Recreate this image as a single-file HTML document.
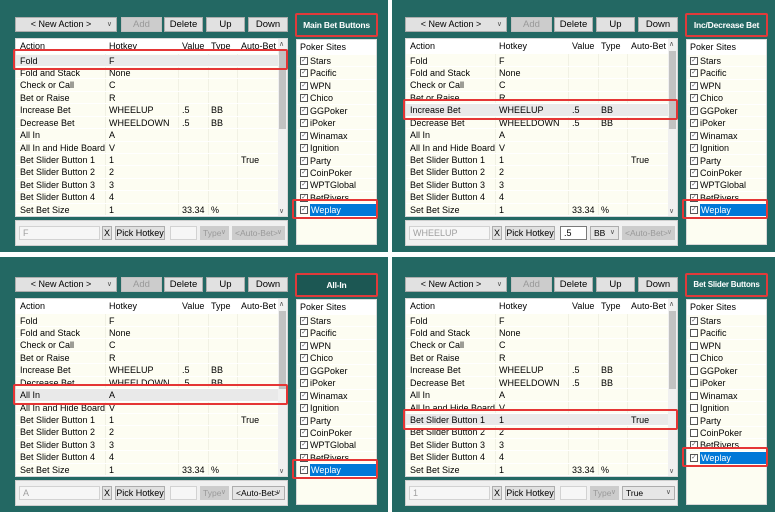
<!DOCTYPE html>
<html><head><meta charset="utf-8">
<style>
*{margin:0;padding:0;box-sizing:border-box}
body{width:775px;height:512px;background:#fff;position:relative;overflow:hidden;font-family:"Liberation Sans",Arial,sans-serif;font-size:9px;color:#000}
.bg{position:absolute;background:#236863}
.p{position:absolute;width:388px;height:252px}
.p>div{position:absolute}
.dd{left:15px;top:17px;width:102px;height:15px;background:#e1e1e1;border:1px solid #adadad;line-height:13px;text-align:center;padding-right:10px}
.chev{position:absolute;right:4px;top:0;font-size:7px;color:#555}
.btn{top:17px;height:15px;background:#e1e1e1;border:1px solid #adadad;line-height:13px;text-align:center;font-size:9.5px}
.dis{background:#cccccc;border-color:#bfbfbf;color:#9a9a9a}
.ttl{left:295px;top:13px;width:83px;height:24px;border:2px solid #e03a3a;color:#fff;font-weight:bold;font-size:8.5px;line-height:20px;text-align:center;border-radius:2px;white-space:nowrap;overflow:hidden;letter-spacing:-0.2px}
.tbl{left:15px;top:38px;width:273px;height:179px;background:#fdfdf2;border:1px solid #d8d8d8;overflow:hidden}
.hd{position:absolute;left:0;top:0;width:264px;height:15px;background:#fff}
.r{position:relative;height:12.45px;border-bottom:1px solid #fff;width:264px}
.r span,.hd span{position:absolute;top:0;line-height:12px;white-space:nowrap}
.hd span{line-height:15px}
.c1{left:4px}.c2{left:93px}.c3{left:166px}.c4{left:195px}.c5{left:225px}
.rows{position:absolute;left:0;top:15.5px}
.vl{position:absolute;top:0;width:1px;height:179px;background:#f1f1e4}
.sel{background:#e9e9e9}
.sb{position:absolute;right:0;top:0;width:9px;height:177px;background:#f0f0f0}
.th{position:absolute;left:1px;top:12px;width:7px;height:78px;background:#c2c2c2}
.au{position:absolute;left:1px;top:1px;font-size:7px;color:#555}
.ad{position:absolute;left:1px;bottom:1px;font-size:7px;color:#555}
.red{border:2px solid #e53535;border-radius:2px}
.bar{left:15px;top:220px;width:273px;height:26px;background:#f0f0f0;border:1px solid #cfcfcf}
.in{top:226px;height:14px;background:#f6f6f6;border:1px solid #d2d2d2;color:#a0a0a0;line-height:12px;padding-left:3px}
.win{background:#fff;border-color:#7a7a7a;color:#000}
.x{left:102px;top:226px;width:10px;height:14px;background:#e1e1e1;border:1px solid #adadad;line-height:12px;text-align:center}
.pk{left:115px;top:226px;width:50px;height:14px;background:#e1e1e1;border:1px solid #adadad;line-height:12px;text-align:center}
.sl{top:226px;height:14px;background:#ccc;color:#9a9a9a;line-height:14px;padding-left:3px;font-size:8.5px}
.sl .chev{top:0;right:3px;color:#999}
.sle{background:#e6e6e6;border:1px solid #adadad;color:#000;line-height:12px}
.sle .chev{color:#555}
.lst{left:296px;top:39px;width:81px;height:206px;background:#fdfdf2;border:1px solid #d8d8d8;overflow:hidden}
.lh{height:15px;background:#fff;line-height:15px;padding-left:3px;font-size:9px}
.li{position:relative;height:12.45px;border-bottom:1px solid #fff;line-height:12px;padding-left:13px;font-size:9px;white-space:nowrap}
.cb{position:absolute;left:3px;top:2px;width:8px;height:8px;border:1px solid #555;font-size:6.5px;line-height:6px;text-align:center;color:#555;background:#fff;font-weight:normal}
.wp span.t{background:#0078d7;color:#fff;display:inline-block;width:68px;padding-left:1px}
</style></head><body>
<div class="bg" style="left:0;top:0;width:388px;height:252px"></div>
<div class="bg" style="left:392px;top:0;width:383px;height:252px"></div>
<div class="bg" style="left:0;top:257px;width:388px;height:255px"></div>
<div class="bg" style="left:392px;top:257px;width:383px;height:255px"></div>

<!-- TOP LEFT -->
<div class="p" style="left:0;top:0">
<div class="dd">&lt; New Action &gt;<span class="chev">&#8744;</span></div>
<div class="btn dis" style="left:121px;width:41px">Add</div>
<div class="btn" style="left:164px;width:39px">Delete</div>
<div class="btn" style="left:206px;width:39px">Up</div>
<div class="btn" style="left:248px;width:40px">Down</div>
<div class="ttl">Main Bet Buttons</div>
<div class="tbl">
<div class="vl" style="left:89px"></div><div class="vl" style="left:162px"></div><div class="vl" style="left:192px"></div><div class="vl" style="left:221px"></div>
<div class="hd"><span class="c1">Action</span><span class="c2">Hotkey</span><span class="c3">Value</span><span class="c4">Type</span><span class="c5">Auto-Bet</span></div>
<div class="rows">
<div class="r sel"><span class="c1">Fold</span><span class="c2">F</span></div>
<div class="r"><span class="c1">Fold and Stack</span><span class="c2">None</span></div>
<div class="r"><span class="c1">Check or Call</span><span class="c2">C</span></div>
<div class="r"><span class="c1">Bet or Raise</span><span class="c2">R</span></div>
<div class="r"><span class="c1">Increase Bet</span><span class="c2">WHEELUP</span><span class="c3">.5</span><span class="c4">BB</span></div>
<div class="r"><span class="c1">Decrease Bet</span><span class="c2">WHEELDOWN</span><span class="c3">.5</span><span class="c4">BB</span></div>
<div class="r"><span class="c1">All In</span><span class="c2">A</span></div>
<div class="r"><span class="c1">All In and Hide Board</span><span class="c2">V</span></div>
<div class="r"><span class="c1">Bet Slider Button 1</span><span class="c2">1</span><span class="c5">True</span></div>
<div class="r"><span class="c1">Bet Slider Button 2</span><span class="c2">2</span></div>
<div class="r"><span class="c1">Bet Slider Button 3</span><span class="c2">3</span></div>
<div class="r"><span class="c1">Bet Slider Button 4</span><span class="c2">4</span></div>
<div class="r"><span class="c1">Set Bet Size</span><span class="c2">1</span><span class="c3">33.34</span><span class="c4">%</span></div>
</div>
<div class="sb"><span class="au">&#8743;</span><div class="th"></div><span class="ad">&#8744;</span></div>
</div>
<div class="red" style="left:13px;top:49px;width:275px;height:21px"></div>
<div class="bar"></div>
<div class="in" style="left:19px;width:81px">F</div>
<div class="x">X</div><div class="pk">Pick Hotkey</div>
<div class="in" style="left:170px;width:27px"></div>
<div class="sl" style="left:200px;width:29px">Type<span class="chev">&#8744;</span></div>
<div class="sl" style="left:232px;width:53px">&lt;Auto-Bet&gt;<span class="chev">&#8744;</span></div>
<div class="lst"><div class="lh">Poker Sites</div>
<div class="li"><span class="cb">&#10003;</span>Stars</div>
<div class="li"><span class="cb">&#10003;</span>Pacific</div>
<div class="li"><span class="cb">&#10003;</span>WPN</div>
<div class="li"><span class="cb">&#10003;</span>Chico</div>
<div class="li"><span class="cb">&#10003;</span>GGPoker</div>
<div class="li"><span class="cb">&#10003;</span>iPoker</div>
<div class="li"><span class="cb">&#10003;</span>Winamax</div>
<div class="li"><span class="cb">&#10003;</span>Ignition</div>
<div class="li"><span class="cb">&#10003;</span>Party</div>
<div class="li"><span class="cb">&#10003;</span>CoinPoker</div>
<div class="li"><span class="cb">&#10003;</span>WPTGlobal</div>
<div class="li"><span class="cb">&#10003;</span>BetRivers</div>
<div class="li wp"><span class="cb">&#10003;</span><span class="t">Weplay</span></div>
</div>
<div class="red" style="left:292px;top:199px;width:86px;height:20px"></div>
</div>

<!-- TOP RIGHT -->
<div class="p" style="left:390px;top:0">
<div class="dd">&lt; New Action &gt;<span class="chev">&#8744;</span></div>
<div class="btn dis" style="left:121px;width:41px">Add</div>
<div class="btn" style="left:164px;width:39px">Delete</div>
<div class="btn" style="left:206px;width:39px">Up</div>
<div class="btn" style="left:248px;width:40px">Down</div>
<div class="ttl">Inc/Decrease Bet</div>
<div class="tbl">
<div class="vl" style="left:89px"></div><div class="vl" style="left:162px"></div><div class="vl" style="left:192px"></div><div class="vl" style="left:221px"></div>
<div class="hd"><span class="c1">Action</span><span class="c2">Hotkey</span><span class="c3">Value</span><span class="c4">Type</span><span class="c5">Auto-Bet</span></div>
<div class="rows">
<div class="r"><span class="c1">Fold</span><span class="c2">F</span></div>
<div class="r"><span class="c1">Fold and Stack</span><span class="c2">None</span></div>
<div class="r"><span class="c1">Check or Call</span><span class="c2">C</span></div>
<div class="r"><span class="c1">Bet or Raise</span><span class="c2">R</span></div>
<div class="r sel"><span class="c1">Increase Bet</span><span class="c2">WHEELUP</span><span class="c3">.5</span><span class="c4">BB</span></div>
<div class="r"><span class="c1">Decrease Bet</span><span class="c2">WHEELDOWN</span><span class="c3">.5</span><span class="c4">BB</span></div>
<div class="r"><span class="c1">All In</span><span class="c2">A</span></div>
<div class="r"><span class="c1">All In and Hide Board</span><span class="c2">V</span></div>
<div class="r"><span class="c1">Bet Slider Button 1</span><span class="c2">1</span><span class="c5">True</span></div>
<div class="r"><span class="c1">Bet Slider Button 2</span><span class="c2">2</span></div>
<div class="r"><span class="c1">Bet Slider Button 3</span><span class="c2">3</span></div>
<div class="r"><span class="c1">Bet Slider Button 4</span><span class="c2">4</span></div>
<div class="r"><span class="c1">Set Bet Size</span><span class="c2">1</span><span class="c3">33.34</span><span class="c4">%</span></div>
</div>
<div class="sb"><span class="au">&#8743;</span><div class="th"></div><span class="ad">&#8744;</span></div>
</div>
<div class="red" style="left:13px;top:99px;width:275px;height:21px"></div>
<div class="bar"></div>
<div class="in" style="left:19px;width:81px">WHEELUP</div>
<div class="x">X</div><div class="pk">Pick Hotkey</div>
<div class="in win" style="left:170px;width:27px">.5</div>
<div class="sl sle" style="left:200px;width:29px">BB<span class="chev">&#8744;</span></div>
<div class="sl" style="left:232px;width:53px">&lt;Auto-Bet&gt;<span class="chev">&#8744;</span></div>
<div class="lst"><div class="lh">Poker Sites</div>
<div class="li"><span class="cb">&#10003;</span>Stars</div>
<div class="li"><span class="cb">&#10003;</span>Pacific</div>
<div class="li"><span class="cb">&#10003;</span>WPN</div>
<div class="li"><span class="cb">&#10003;</span>Chico</div>
<div class="li"><span class="cb">&#10003;</span>GGPoker</div>
<div class="li"><span class="cb">&#10003;</span>iPoker</div>
<div class="li"><span class="cb">&#10003;</span>Winamax</div>
<div class="li"><span class="cb">&#10003;</span>Ignition</div>
<div class="li"><span class="cb">&#10003;</span>Party</div>
<div class="li"><span class="cb">&#10003;</span>CoinPoker</div>
<div class="li"><span class="cb">&#10003;</span>WPTGlobal</div>
<div class="li"><span class="cb">&#10003;</span>BetRivers</div>
<div class="li wp"><span class="cb">&#10003;</span><span class="t">Weplay</span></div>
</div>
<div class="red" style="left:292px;top:199px;width:86px;height:20px"></div>
</div>

<!-- BOTTOM LEFT -->
<div class="p" style="left:0;top:260px">
<div class="dd">&lt; New Action &gt;<span class="chev">&#8744;</span></div>
<div class="btn dis" style="left:121px;width:41px">Add</div>
<div class="btn" style="left:164px;width:39px">Delete</div>
<div class="btn" style="left:206px;width:39px">Up</div>
<div class="btn" style="left:248px;width:40px">Down</div>
<div class="ttl" style="background:#1c5753">All-In</div>
<div class="tbl">
<div class="vl" style="left:89px"></div><div class="vl" style="left:162px"></div><div class="vl" style="left:192px"></div><div class="vl" style="left:221px"></div>
<div class="hd"><span class="c1">Action</span><span class="c2">Hotkey</span><span class="c3">Value</span><span class="c4">Type</span><span class="c5">Auto-Bet</span></div>
<div class="rows">
<div class="r"><span class="c1">Fold</span><span class="c2">F</span></div>
<div class="r"><span class="c1">Fold and Stack</span><span class="c2">None</span></div>
<div class="r"><span class="c1">Check or Call</span><span class="c2">C</span></div>
<div class="r"><span class="c1">Bet or Raise</span><span class="c2">R</span></div>
<div class="r"><span class="c1">Increase Bet</span><span class="c2">WHEELUP</span><span class="c3">.5</span><span class="c4">BB</span></div>
<div class="r"><span class="c1">Decrease Bet</span><span class="c2">WHEELDOWN</span><span class="c3">.5</span><span class="c4">BB</span></div>
<div class="r sel"><span class="c1">All In</span><span class="c2">A</span></div>
<div class="r"><span class="c1">All In and Hide Board</span><span class="c2">V</span></div>
<div class="r"><span class="c1">Bet Slider Button 1</span><span class="c2">1</span><span class="c5">True</span></div>
<div class="r"><span class="c1">Bet Slider Button 2</span><span class="c2">2</span></div>
<div class="r"><span class="c1">Bet Slider Button 3</span><span class="c2">3</span></div>
<div class="r"><span class="c1">Bet Slider Button 4</span><span class="c2">4</span></div>
<div class="r"><span class="c1">Set Bet Size</span><span class="c2">1</span><span class="c3">33.34</span><span class="c4">%</span></div>
</div>
<div class="sb"><span class="au">&#8743;</span><div class="th"></div><span class="ad">&#8744;</span></div>
</div>
<div class="red" style="left:13px;top:124px;width:275px;height:21px"></div>
<div class="bar"></div>
<div class="in" style="left:19px;width:81px">A</div>
<div class="x">X</div><div class="pk">Pick Hotkey</div>
<div class="in" style="left:170px;width:27px"></div>
<div class="sl" style="left:200px;width:29px">Type<span class="chev">&#8744;</span></div>
<div class="sl sle" style="left:232px;width:53px">&lt;Auto-Bet&gt;<span class="chev">&#8744;</span></div>
<div class="lst"><div class="lh">Poker Sites</div>
<div class="li"><span class="cb">&#10003;</span>Stars</div>
<div class="li"><span class="cb">&#10003;</span>Pacific</div>
<div class="li"><span class="cb">&#10003;</span>WPN</div>
<div class="li"><span class="cb">&#10003;</span>Chico</div>
<div class="li"><span class="cb">&#10003;</span>GGPoker</div>
<div class="li"><span class="cb">&#10003;</span>iPoker</div>
<div class="li"><span class="cb">&#10003;</span>Winamax</div>
<div class="li"><span class="cb">&#10003;</span>Ignition</div>
<div class="li"><span class="cb">&#10003;</span>Party</div>
<div class="li"><span class="cb">&#10003;</span>CoinPoker</div>
<div class="li"><span class="cb">&#10003;</span>WPTGlobal</div>
<div class="li"><span class="cb">&#10003;</span>BetRivers</div>
<div class="li wp"><span class="cb">&#10003;</span><span class="t">Weplay</span></div>
</div>
<div class="red" style="left:292px;top:199px;width:86px;height:20px"></div>
</div>

<!-- BOTTOM RIGHT -->
<div class="p" style="left:390px;top:260px">
<div class="dd">&lt; New Action &gt;<span class="chev">&#8744;</span></div>
<div class="btn dis" style="left:121px;width:41px">Add</div>
<div class="btn" style="left:164px;width:39px">Delete</div>
<div class="btn" style="left:206px;width:39px">Up</div>
<div class="btn" style="left:248px;width:40px">Down</div>
<div class="ttl" style="font-size:8px">Bet Slider Buttons</div>
<div class="tbl">
<div class="vl" style="left:89px"></div><div class="vl" style="left:162px"></div><div class="vl" style="left:192px"></div><div class="vl" style="left:221px"></div>
<div class="hd"><span class="c1">Action</span><span class="c2">Hotkey</span><span class="c3">Value</span><span class="c4">Type</span><span class="c5">Auto-Bet</span></div>
<div class="rows">
<div class="r"><span class="c1">Fold</span><span class="c2">F</span></div>
<div class="r"><span class="c1">Fold and Stack</span><span class="c2">None</span></div>
<div class="r"><span class="c1">Check or Call</span><span class="c2">C</span></div>
<div class="r"><span class="c1">Bet or Raise</span><span class="c2">R</span></div>
<div class="r"><span class="c1">Increase Bet</span><span class="c2">WHEELUP</span><span class="c3">.5</span><span class="c4">BB</span></div>
<div class="r"><span class="c1">Decrease Bet</span><span class="c2">WHEELDOWN</span><span class="c3">.5</span><span class="c4">BB</span></div>
<div class="r"><span class="c1">All In</span><span class="c2">A</span></div>
<div class="r"><span class="c1">All In and Hide Board</span><span class="c2">V</span></div>
<div class="r sel"><span class="c1">Bet Slider Button 1</span><span class="c2">1</span><span class="c5">True</span></div>
<div class="r"><span class="c1">Bet Slider Button 2</span><span class="c2">2</span></div>
<div class="r"><span class="c1">Bet Slider Button 3</span><span class="c2">3</span></div>
<div class="r"><span class="c1">Bet Slider Button 4</span><span class="c2">4</span></div>
<div class="r"><span class="c1">Set Bet Size</span><span class="c2">1</span><span class="c3">33.34</span><span class="c4">%</span></div>
</div>
<div class="sb"><span class="au">&#8743;</span><div class="th"></div><span class="ad">&#8744;</span></div>
</div>
<div class="red" style="left:13px;top:149px;width:275px;height:21px"></div>
<div class="bar"></div>
<div class="in" style="left:19px;width:81px">1</div>
<div class="x">X</div><div class="pk">Pick Hotkey</div>
<div class="in" style="left:170px;width:27px"></div>
<div class="sl" style="left:200px;width:29px">Type<span class="chev">&#8744;</span></div>
<div class="sl sle" style="left:232px;width:53px">True<span class="chev">&#8744;</span></div>
<div class="lst"><div class="lh">Poker Sites</div>
<div class="li"><span class="cb">&#10003;</span>Stars</div>
<div class="li"><span class="cb"></span>Pacific</div>
<div class="li"><span class="cb"></span>WPN</div>
<div class="li"><span class="cb"></span>Chico</div>
<div class="li"><span class="cb"></span>GGPoker</div>
<div class="li"><span class="cb"></span>iPoker</div>
<div class="li"><span class="cb"></span>Winamax</div>
<div class="li"><span class="cb"></span>Ignition</div>
<div class="li"><span class="cb"></span>Party</div>
<div class="li"><span class="cb"></span>CoinPoker</div>
<div class="li"><span class="cb">&#10003;</span>BetRivers</div>
<div class="li wp"><span class="cb">&#10003;</span><span class="t">Weplay</span></div>
</div>
<div class="red" style="left:292px;top:187px;width:86px;height:20px"></div>
</div>
</body></html>
